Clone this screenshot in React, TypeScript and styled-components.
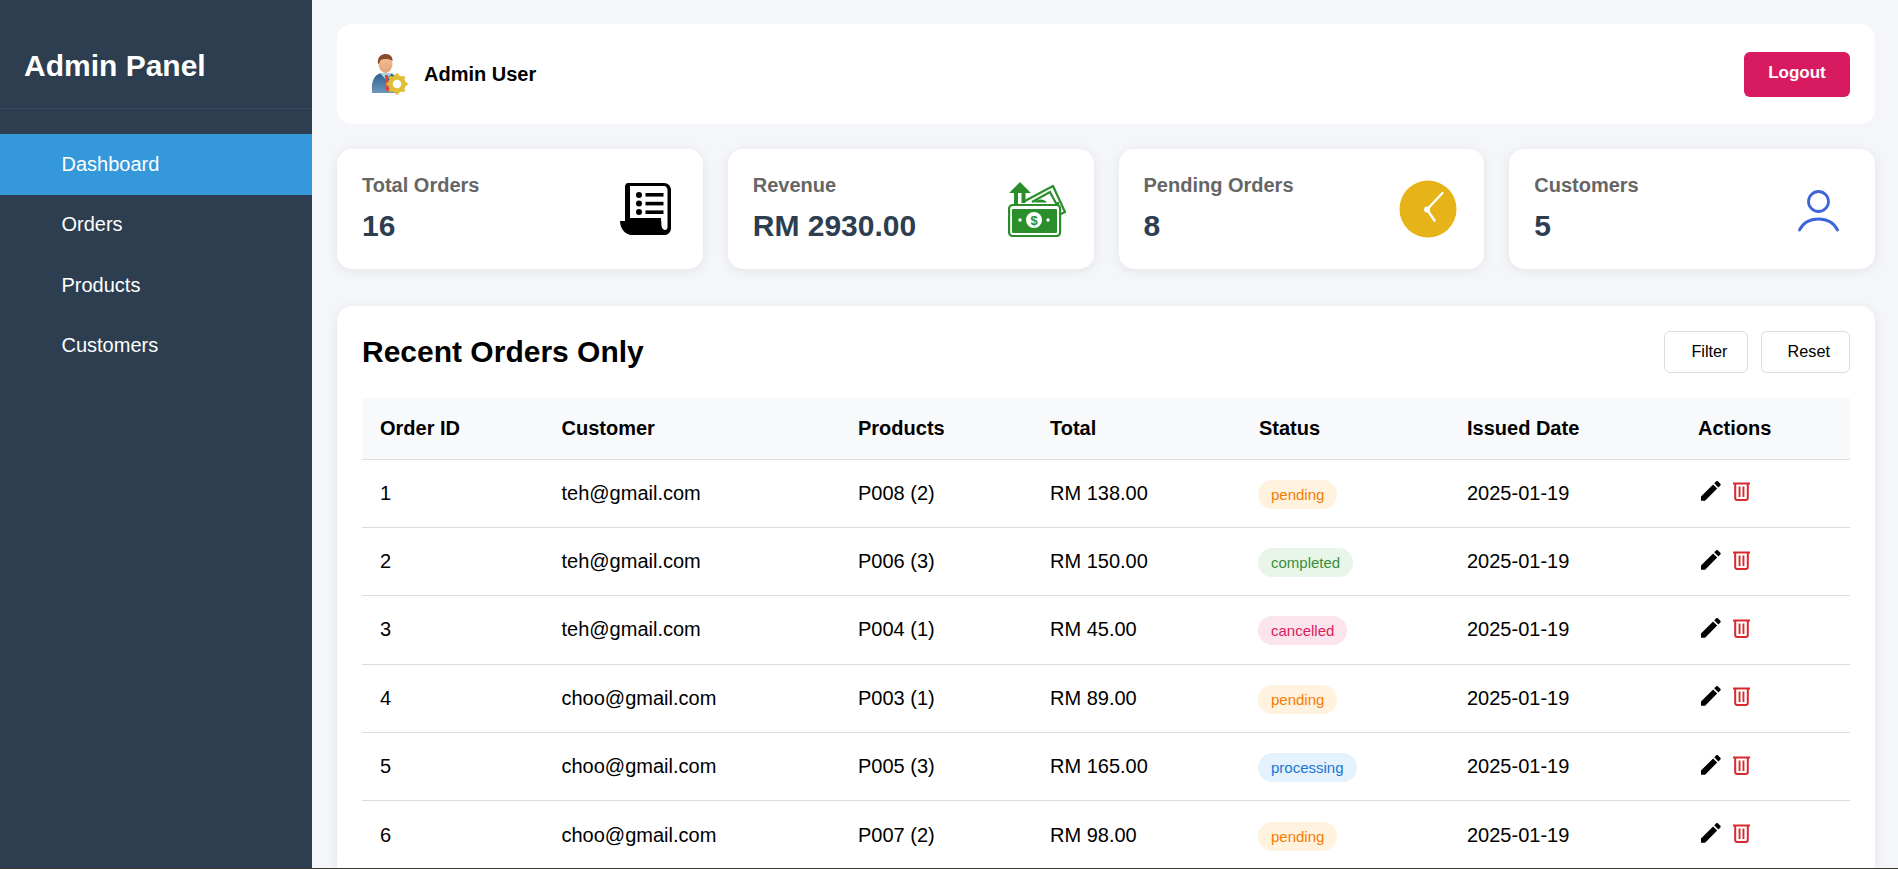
import React from "react";
import styled, { createGlobalStyle } from "styled-components";

const Global = createGlobalStyle`
  html, body { margin: 0; padding: 0; height: 100%; overflow: hidden; }
  body { font-family: "Liberation Sans", Arial, sans-serif; background: #f4f6f9; color: #000; }
  * { box-sizing: border-box; }
`;

const Page = styled.div`
  height: 100vh;
  display: flex;
  flex-direction: column;
`;
const Frame = styled.div`
  flex: 1;
  min-height: 0;
  display: flex;
  overflow: hidden;
`;
const BottomEdge = styled.div`
  height: 1px;
  background: #3a3a30;
  flex: none;
`;
const Sidebar = styled.aside`
  width: 312px;
  flex: none;
  background: #2c3e50;
  color: #fff;
`;
const Brand = styled.div`
  height: 109px;
  padding: 23px 24px 0;
  display: flex;
  align-items: center;
  border-bottom: 1px solid #34495e;
  font-size: 30px;
  font-weight: 700;
`;
const Nav = styled.nav`
  margin-top: 25px;
  display: flex;
  flex-direction: column;
`;
const NavItem = styled.a<{ $active?: boolean }>`
  height: 60.5px;
  padding-left: 61.5px;
  display: flex;
  align-items: center;
  font-size: 20px;
  color: #fff;
  background: ${(p) => (p.$active ? "#3498db" : "transparent")};
`;
const Main = styled.main`
  flex: 1;
  min-width: 0;
  padding: 24px 23px 0 25px;
  display: flex;
  flex-direction: column;
  gap: 25px;
`;
const HeaderCard = styled.header`
  height: 100px;
  flex: none;
  background: #fff;
  border-radius: 15px;
  padding: 0 25px;
  display: flex;
  align-items: center;
  justify-content: space-between;
`;
const UserBox = styled.div`
  display: flex;
  align-items: center;
  gap: 12px;
  font-size: 20px;
  font-weight: 700;
`;
const LogoutButton = styled.button`
  width: 106px;
  height: 45px;
  border: 0;
  border-radius: 6px;
  background: #d81b60;
  color: #fff;
  font: 700 17px "Liberation Sans", Arial, sans-serif;
  padding: 0 0 2px;
`;
const Stats = styled.section`
  flex: none;
  display: grid;
  grid-template-columns: repeat(4, 1fr);
  gap: 25px;
`;
const StatCard = styled.div`
  height: 120px;
  background: #fff;
  border-radius: 15px;
  padding: 0 25px;
  display: flex;
  align-items: center;
  justify-content: space-between;
  box-shadow: 0 2px 12px rgba(0, 0, 0, 0.08);
`;
const StatText = styled.div`
  display: flex;
  flex-direction: column;
  gap: 12px;
  margin-top: -2px;
`;
const StatLabel = styled.div`
  font-size: 20px;
  font-weight: 700;
  line-height: 23px;
  color: #666;
`;
const StatValue = styled.div`
  font-size: 30px;
  font-weight: 700;
  line-height: 34px;
  color: #2c3e50;
`;
const StatIcon = styled.svg<{ $right?: number; $down?: number }>`
  display: block;
  flex: none;
  margin-right: ${(p) => p.$right ?? 0}px;
  margin-top: ${(p) => p.$down ?? 0}px;
`;
const Avatar = styled.svg`
  display: block;
  flex: none;
`;
const TableCard = styled.section`
  flex: 1;
  background: #fff;
  border-radius: 15px 15px 0 0;
  padding: 25px 25px 0;
  box-shadow: 0 2px 12px rgba(0, 0, 0, 0.08);
  margin-top: 12px;
`;
const TableHead = styled.div`
  height: 42px;
  margin-bottom: 25px;
  display: flex;
  align-items: center;
  justify-content: space-between;
`;
const Title = styled.h2`
  margin: 0;
  font-size: 30px;
  font-weight: 700;
`;
const Tools = styled.div`
  display: flex;
  gap: 13px;
`;
const ToolButton = styled.button`
  height: 42px;
  padding: 0 19px 2px 26px;
  background: #fff;
  border: 1px solid #ddd;
  border-radius: 6px;
  color: #000;
  font: 400 16.25px "Liberation Sans", Arial, sans-serif;
`;
const Table = styled.table`
  width: 100%;
  table-layout: fixed;
  border-collapse: collapse;
  font-size: 20px;
`;
const Th = styled.th<{ $w: number }>`
  width: ${(p) => p.$w}px;
  height: 61px;
  padding: 0 0 0 18px;
  text-align: left;
  font-weight: 700;
  background: #f8f9fa;
  border-bottom: 1px solid #ddd;
`;
const Tr = styled.tr`
  height: 68.4px;
`;
const Td = styled.td`
  padding: 0 0 0 18px;
  border-bottom: 1px solid #ddd;
`;
const tones = {
  pending: ["#fff3e0", "#f57c00"],
  completed: ["#e8f5e9", "#388e3c"],
  cancelled: ["#fce4ec", "#d81b60"],
  processing: ["#e3f2fd", "#1976d2"],
} as const;
type Status = keyof typeof tones;
const Badge = styled.span<{ $status: Status }>`
  display: inline-block;
  padding: 6px 13px;
  height: 29px;
  line-height: 17px;
  border-radius: 15px;
  font-size: 15px;
  vertical-align: middle;
  margin: 2px 0 0 -1px;
  background: ${(p) => tones[p.$status][0]};
  color: ${(p) => tones[p.$status][1]};
`;
const Actions = styled.div`
  display: flex;
  align-items: center;
  gap: 12px;
  padding: 0 0 4px 3px;
`;
const ActionIcon = styled.svg`
  display: block;
  flex: none;
`;

const orders: [number, string, string, string, Status][] = [
  [1, "teh@gmail.com", "P008 (2)", "RM 138.00", "pending"],
  [2, "teh@gmail.com", "P006 (3)", "RM 150.00", "completed"],
  [3, "teh@gmail.com", "P004 (1)", "RM 45.00", "cancelled"],
  [4, "choo@gmail.com", "P003 (1)", "RM 89.00", "pending"],
  [5, "choo@gmail.com", "P005 (3)", "RM 165.00", "processing"],
  [6, "choo@gmail.com", "P007 (2)", "RM 98.00", "pending"],
];
const columns: [string, number][] = [
  ["Order ID", 181.5],
  ["Customer", 296.5],
  ["Products", 192],
  ["Total", 209],
  ["Status", 208],
  ["Issued Date", 231],
  ["Actions", 170],
];

const AvatarIcon = () => (
  <Avatar width="50" height="50" viewBox="0 0 50 50">
    <defs>
      <linearGradient id="jacket" x1="0" y1="0" x2="0" y2="1">
        <stop offset="0" stopColor="#2c6091" />
        <stop offset="1" stopColor="#6b97ba" />
      </linearGradient>
      <linearGradient id="skin" x1="0" y1="0" x2="0" y2="1">
        <stop offset="0" stopColor="#f3c29a" />
        <stop offset="1" stopColor="#e2a47c" />
      </linearGradient>
    </defs>
    <path d="M10 44 C9 32 12 26 19 24 L28 24 C34 26 37 30 37 44 Z" fill="url(#jacket)" />
    <path d="M18 24 L24 31 L30 24 Z" fill="#a9d3dc" />
    <path d="M23 26 H26 L27 42 H24 Z" fill="#e2403a" />
    <ellipse cx="23.5" cy="15" rx="7" ry="9" fill="url(#skin)" />
    <path d="M16 15 C15 7 20 5 24 5 C28 5 31 8 30.5 12 C27 9 21 10 18.5 11 C18 13 17 15 16 15 Z" fill="#8a4a2c" />
    <g transform="translate(35 35)">
      <circle r="6.6" fill="#fff" stroke="#e0bd35" strokeWidth="4.6" />
      <path d="M-1.6 -10.5 H1.6 V-7 H-1.6 Z M-1.6 10.5 H1.6 V7 H-1.6 Z M-10.5 -1.6 V1.6 H-7 V-1.6 Z M10.5 -1.6 V1.6 H7 V-1.6 Z" fill="#e0bd35" />
      <path d="M-1.6 -10.5 H1.6 V-7 H-1.6 Z M-1.6 10.5 H1.6 V7 H-1.6 Z M-10.5 -1.6 V1.6 H-7 V-1.6 Z M10.5 -1.6 V1.6 H7 V-1.6 Z" fill="#e0bd35" transform="rotate(45)" />
    </g>
  </Avatar>
);
const ScrollIcon = () => (
  <StatIcon $right={6} width="52" height="52" viewBox="0 0 52 52">
    <path d="M8 0 H44 C48 0 51 3 51 7 V45 C51 49 48 52 45 52 H12 C5 52 0 45 0 38 H5 V4 C5 2 6 0 8 0 Z" fill="#000" />
    <path d="M10 3 V35 H41 L41.5 43 C42 45.5 43.5 47 45 47 C46.5 47 47.5 46 47.5 44 V7 C47.5 5 46 3 44 3 Z" fill="#fff" />
    <circle cx="19" cy="12" r="3" fill="#000" />
    <circle cx="19" cy="20.5" r="3" fill="#000" />
    <circle cx="19" cy="29" r="3" fill="#000" />
    <rect x="25.5" y="10" width="18" height="3.6" fill="#000" />
    <rect x="25.5" y="18.8" width="18" height="3.6" fill="#000" />
    <rect x="25.5" y="27.4" width="18" height="3.6" fill="#000" />
  </StatIcon>
);
const MoneyIcon = () => (
  <StatIcon $right={3} width="58" height="55" viewBox="0 0 58 55">
    <path d="M12 0 L23 11 H17.5 V21 H13.5 V11 H10 V22 H6 V11 H1 Z" fill="#2a8f2a" />
    <path d="M15 20 L45 4 L57 30 L53 32" fill="none" stroke="#2a8f2a" strokeWidth="2.2" strokeLinejoin="round" />
    <path d="M24 20 L42 10 L50 25 V20" fill="none" stroke="#2a8f2a" strokeWidth="2.2" />
    <path d="M26 20.5 C30 16.5 36 16.5 39 20.5 Z" fill="#2a8f2a" />
    <rect x="1.1" y="23" width="51" height="31" rx="3.5" fill="#fff" stroke="#2a8f2a" strokeWidth="2.2" />
    <rect x="4" y="27" width="45" height="24" rx="1" fill="#2a8f2a" />
    <circle cx="26" cy="38" r="8" fill="#fff" />
    <circle cx="12" cy="38" r="1.7" fill="#fff" />
    <circle cx="40" cy="38" r="1.7" fill="#fff" />
    <text x="26" y="42.5" textAnchor="middle" fontSize="13" fontWeight="700" fontFamily="Liberation Sans, sans-serif" fill="#2a8f2a">$</text>
  </StatIcon>
);
const ClockIcon = () => (
  <StatIcon $right={2.5} width="58" height="58" viewBox="0 0 58 58">
    <circle cx="29" cy="29" r="28.5" fill="#e6b318" />
    <path d="M28 29.5 L43.5 13 M28 29.5 L35.5 40.5" stroke="#fff" strokeWidth="2.4" strokeLinecap="round" />
    <circle cx="28" cy="29.5" r="3" fill="#fff" />
  </StatIcon>
);
const PersonIcon = () => (
  <StatIcon $right={11} $down={3} width="41" height="42" viewBox="0 0 41 42">
    <circle cx="20.5" cy="11.5" r="10" fill="none" stroke="#3f66d8" strokeWidth="2.8" />
    <path d="M1.5 40 C5 33 12 29 20.5 29 C29 29 36 33 39.5 40" fill="none" stroke="#3f66d8" strokeWidth="2.8" strokeLinecap="round" />
  </StatIcon>
);
const PencilIcon = () => (
  <ActionIcon width="20" height="20" viewBox="3 3 18.3 18.3">
    <path
      fill="#000"
      d="M3 17.25V21h3.75L17.81 9.94l-3.75-3.75L3 17.25z M20.71 7.04c.39-.39.39-1.02 0-1.41l-2.34-2.34c-.39-.39-1.02-.39-1.41 0l-1.83 1.83 3.75 3.75 1.83-1.83z"
    />
  </ActionIcon>
);
const TrashIcon = () => (
  <ActionIcon width="17" height="20" viewBox="0 0 17 20">
    <path d="M0 1.5 H17 V3.5 H0 Z" fill="#d9292f" />
    <path d="M2.2 3 V17 C2.2 18.2 3 19 4.2 19 H12.8 C14 19 14.8 18.2 14.8 17 V3" fill="none" stroke="#d9292f" strokeWidth="2" />
    <rect x="5.6" y="5.5" width="1.9" height="10.5" fill="#d9292f" />
    <rect x="9.5" y="5.5" width="1.9" height="10.5" fill="#d9292f" />
  </ActionIcon>
);

export default function App() {
  return (
    <Page>
      <Global />
      <Frame>
        <Sidebar>
          <Brand>Admin Panel</Brand>
          <Nav>
            <NavItem $active>Dashboard</NavItem>
            <NavItem>Orders</NavItem>
            <NavItem>Products</NavItem>
            <NavItem>Customers</NavItem>
          </Nav>
        </Sidebar>
        <Main>
          <HeaderCard>
            <UserBox>
              <AvatarIcon />
              Admin User
            </UserBox>
            <LogoutButton>Logout</LogoutButton>
          </HeaderCard>
          <Stats>
            <StatCard>
              <StatText>
                <StatLabel>Total Orders</StatLabel>
                <StatValue>16</StatValue>
              </StatText>
              <ScrollIcon />
            </StatCard>
            <StatCard>
              <StatText>
                <StatLabel>Revenue</StatLabel>
                <StatValue>RM 2930.00</StatValue>
              </StatText>
              <MoneyIcon />
            </StatCard>
            <StatCard>
              <StatText>
                <StatLabel>Pending Orders</StatLabel>
                <StatValue>8</StatValue>
              </StatText>
              <ClockIcon />
            </StatCard>
            <StatCard>
              <StatText>
                <StatLabel>Customers</StatLabel>
                <StatValue>5</StatValue>
              </StatText>
              <PersonIcon />
            </StatCard>
          </Stats>
          <TableCard>
            <TableHead>
              <Title>Recent Orders Only</Title>
              <Tools>
                <ToolButton>Filter</ToolButton>
                <ToolButton>Reset</ToolButton>
              </Tools>
            </TableHead>
            <Table>
              <thead>
                <tr>
                  {columns.map(([label, w]) => (
                    <Th key={label} $w={w}>
                      {label}
                    </Th>
                  ))}
                </tr>
              </thead>
              <tbody>
                {orders.map(([id, mail, product, total, status]) => (
                  <Tr key={id}>
                    <Td>{id}</Td>
                    <Td>{mail}</Td>
                    <Td>{product}</Td>
                    <Td>{total}</Td>
                    <Td>
                      <Badge $status={status}>{status}</Badge>
                    </Td>
                    <Td>2025-01-19</Td>
                    <Td>
                      <Actions>
                        <PencilIcon />
                        <TrashIcon />
                      </Actions>
                    </Td>
                  </Tr>
                ))}
              </tbody>
            </Table>
          </TableCard>
        </Main>
      </Frame>
      <BottomEdge />
    </Page>
  );
}
